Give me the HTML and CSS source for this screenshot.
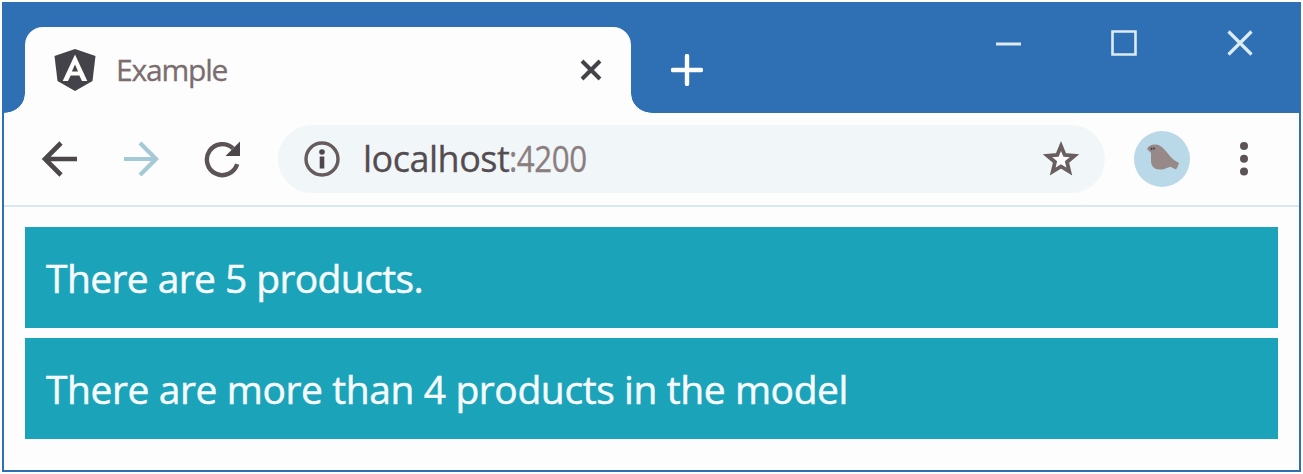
FILE: index.html
```html
<!DOCTYPE html>
<html lang="en">
<head>
<meta charset="utf-8">
<title>Example</title>
<link rel="stylesheet" href="styles.css">
</head>
<body>
<div class="window">
  <header class="titlebar">
    <span class="flare flare-left"></span>
    <div class="tab">
      <svg class="logo" width="42" height="42" viewBox="0 0 42 42"><path fill="#444349" d="M21 0 41.5 7 38.5 32 21 42 3.5 32 .5 7z"/><path fill="#fdfdfd" fill-rule="evenodd" d="M21 5.500 33.3 32H28L25.3 26.5H16.7L14 32H8.7zM21 15.5 17.9 22.5H24.1z"/></svg>
      <span class="tab-title">Example</span>
      <svg class="tab-close" width="22" height="22" viewBox="0 0 22 22"><path d="M2 2 20 20M20 2 2 20" stroke="#444349" stroke-width="4"/></svg>
    </div>
    <span class="flare flare-right"></span>
    <svg class="new-tab" width="32" height="32" viewBox="0 0 32 32"><path d="M16 2V30M2 16H30" stroke="#fdfdfd" stroke-width="4.4" stroke-linecap="round"/></svg>
    <div class="controls">
      <svg width="28" height="28" viewBox="0 0 28 28"><path d="M2 15H27" stroke="#dcebf2" stroke-width="3"/></svg>
      <svg width="28" height="28" viewBox="0 0 28 28"><path d="M2.5 2.5H25.5V25.5H2.5z" fill="none" stroke="#dcebf2" stroke-width="2.6"/></svg>
      <svg width="28" height="28" viewBox="0 0 28 28"><path d="M2.5 2.5 25.5 25.5M25.5 2.5 2.5 25.5" stroke="#dcebf2" stroke-width="3.2"/></svg>
    </div>
  </header>
  <nav class="toolbar">
    <svg class="back" width="38" height="38" viewBox="0 0 38 38"><path d="M20 3 4 19 20 35M4 19H36" fill="none" stroke="#4b474b" stroke-width="4.6"/></svg>
    <svg class="forward" width="38" height="38" viewBox="0 0 38 38"><path d="M18 3 34 19 18 35M34 19H2" fill="none" stroke="#a4cad8" stroke-width="4.2"/></svg>
    <svg class="reload" width="38" height="38" viewBox="0 0 38 38"><path d="M34.2 24.2A15.500 15.500 0 1 1 30 8.3" fill="none" stroke="#5c5355" stroke-width="4.4"/><path d="M37 1.5V16H22.500z" fill="#4b474b"/></svg>
    <div class="address">
      <svg class="info" width="38" height="38" viewBox="0 0 38 38"><circle cx="19" cy="19" r="16" fill="none" stroke="#665b5d" stroke-width="3.4"/><circle cx="19" cy="12" r="2.8" fill="#4b474b"/><path d="M19 16.5V28.5" stroke="#4b474b" stroke-width="4.6"/></svg>
      <span class="url">localhost<span class="port">:4200</span></span>
      <svg class="star" width="38" height="38" viewBox="0 0 38 38"><path d="M19 6 22.700 14.9 32.500 15.7 25 22 27.300 31.600 19 26.500 10.700 31.600 13 22 5.500 15.7 15.300 14.9z" fill="#fdfdfd" stroke="#695e60" stroke-width="3.8"/></svg>
    </div>
    <svg class="avatar" width="56" height="56" viewBox="0 0 56 56"><circle cx="28" cy="28" r="28" fill="#b9d9e8"/><path d="M13 18C14 15 17 13.5 21 13.5C25 13.5 27 15 30 18C34 22 36 26 40 29L45 32 43.5 36 42 38.500 37 36C34 35.500 32 38.500 26 38.5C19 38.500 16.5 34 17 27V22z" fill="#978987"/><path d="M17.5 16.500V19M20 16.500V18.500" stroke="#4b474b" stroke-width="1.8"/></svg>
    <svg class="menu" width="10" height="36" viewBox="0 0 10 36"><g fill="#5c5355"><circle cx="5" cy="5" r="4"/><circle cx="5" cy="17.7" r="4"/><circle cx="5" cy="30.4" r="4"/></g></svg>
  </nav>
  <main class="page">
    <div class="alert">There are 5 products.</div>
    <div class="alert alert-long">There are more than 4 products in the model</div>
  </main>
</div>
</body>
</html>
```
FILE: styles.css
```css
* { box-sizing: border-box; }
body { margin: 0; padding: 2px; background: #fdfdfd; font-family: "Open Sans", "Noto Sans", sans-serif; }
svg { display: block; flex: none; }
.window { width: 1299px; height: 470px; border: 2px solid #2f70b5; background: #fdfdfd; }
.titlebar { display: flex; align-items: flex-end; height: 109px; background: #2f70b5; }
.tab { display: flex; align-items: center; width: 606px; height: 86px; padding: 0 29px 0 29px; background: #fdfdfd; border-radius: 18px 18px 0 0; }
.flare { flex: none; width: 21px; height: 19px; }
.flare-left { background: radial-gradient(ellipse 21px 19px at 0 0, #2f70b5 97%, #fdfdfd 100%); }
.flare-right { background: radial-gradient(ellipse 21px 19px at 100% 0, #2f70b5 97%, #fdfdfd 100%); }
.tab-title { flex: 1; margin-left: 20px; font-size: 30px; line-height: 40px; letter-spacing: -1.2px; color: #7b6d6e; -webkit-text-stroke: 0.3px; white-space: nowrap; }
.new-tab { margin: 0 0 27px 19px; }
.controls { display: flex; gap: 88px; margin: 0 45px 56px auto; }
.toolbar { display: flex; align-items: center; height: 94px; padding-bottom: 1px; border-bottom: 2px solid #d8e7f0; }
.back { margin-left: 37px; }
.forward { margin-left: 43px; }
.reload { margin-left: 43px; }
.address { display: flex; align-items: center; width: 827px; height: 68px; margin-left: 37px; padding: 0 25px; border-radius: 34px; background: #f1f6f9; }
.url { flex: 1; margin-left: 22px; font-size: 36px; line-height: 48px; letter-spacing: -0.5px; color: #554c50; -webkit-text-stroke: 0.3px; white-space: nowrap; }
.port { display: inline-block; color: #8b7e7f; transform: scaleX(0.87); transform-origin: 0 50%; }
.avatar { margin-left: 29px; }
.menu { margin-left: 49px; }
.page { display: grid; gap: 10px; padding: 20px 21px 0 21px; }
.alert { display: flex; align-items: center; height: 101px; padding-left: 21px; background: #1aa3b9; color: #f6fafc; font-size: 39px; line-height: 54px; letter-spacing: -0.6px; -webkit-text-stroke: 0.5px; white-space: nowrap; }
.alert-long { letter-spacing: -0.41px; }
```
